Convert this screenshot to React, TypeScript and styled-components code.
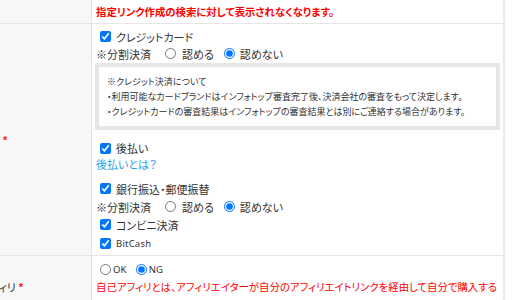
import React from "react";
import styled, { createGlobalStyle } from "styled-components";

const Global = createGlobalStyle`
  html, body { margin: 0; padding: 0; background: #fff; }
  body {
    font-family: "Noto Sans CJK JP", "Noto Sans", sans-serif;
    font-size: 11px;
    color: #333;
    font-feature-settings: "palt";
    overflow: hidden;
  }
`;

const Page = styled.div`
  width: 520px;
  height: 300px;
  overflow: hidden;
`;

const Table = styled.div`
  margin-left: -50px;
  width: 553px;
  border-right: 2px solid #ebebeb;
`;

const Row = styled.div`
  display: grid;
  grid-template-columns: 142px 1fr;
  border-bottom: 1px solid #e6e6e6;
`;

const LabelCell = styled.div`
  display: flex;
  align-items: center;
  gap: 3px;
  padding-left: 7px;
  background: #f7f7f7;
  border-right: 1px solid #e3e3e3;
  font-size: 11px;
  color: #333;
  white-space: nowrap;
`;

const Required = styled.span`
  color: #ff1a1a;
  font-family: "Liberation Sans", sans-serif;
  font-weight: bold;
  font-size: 11px;
`;

const ValueCell = styled.div<{ $pad: string }>`
  padding: ${(p) => p.$pad};
  display: flex;
  flex-direction: column;
`;

const Notice = styled.div<{ $bold?: boolean; $size: number }>`
  color: #ff0000;
  font-size: ${(p) => p.$size}px;
  font-weight: ${(p) => (p.$bold ? "bold" : "normal")};
  line-height: 18px;
`;

const Line = styled.div<{ $h: number; $mt?: number }>`
  display: flex;
  align-items: center;
  height: ${(p) => p.$h}px;
  margin-top: ${(p) => p.$mt ?? 0}px;
  white-space: nowrap;
`;

const Check = styled.input.attrs({ type: "checkbox", readOnly: true })`
  width: 11px;
  height: 11px;
  margin: 0 5px 0 4px;
  accent-color: #0075ff;
`;

const Radio = styled.input.attrs({ type: "radio", readOnly: true })<{ $ml?: number; $mr?: number }>`
  width: 11px;
  height: 11px;
  margin: 0 ${(p) => p.$mr ?? 6}px 0 ${(p) => p.$ml ?? 0}px;
  accent-color: #0075ff;
`;

const SplitLabel = styled.span`
  margin-right: 14px;
`;

const Latin = styled.span`
  font-family: "Noto Sans", sans-serif;
  font-size: 9.5px;
  letter-spacing: 0.2px;
`;

const InfoBox = styled.div`
  margin-top: 1px;
  margin-left: -1px;
  border: 4px solid #e6e6e6;
  padding: 7px 8px;
  font-size: 9px;
  line-height: 15px;
  color: #333;
`;

const Link = styled.a`
  color: #2b9fe4;
  text-decoration: none;
  cursor: pointer;
`;

const Gap = styled.span<{ $w: number }>`
  display: inline-block;
  width: ${(p) => p.$w}px;
`;

function SplitPayment({ name }: { name: string }) {
  return (
    <>
      <SplitLabel>※分割決済</SplitLabel>
      <Radio name={name} $mr={6} />
      <span>認める</span>
      <Gap $w={10} />
      <Radio name={name} defaultChecked $mr={5} />
      <span>認めない</span>
    </>
  );
}

export default function App() {
  return (
    <Page>
      <Global />
      <Table>
        <Row>
          <LabelCell />
          <ValueCell $pad="3px 4px 2px 4px">
            <Notice $bold $size={10.4}>指定リンク作成の検索に対して表示されなくなります。</Notice>
          </ValueCell>
        </Row>
        <Row>
          <LabelCell>
            <span>お支払い</span>
            <Required>*</Required>
          </LabelCell>
          <ValueCell $pad="4px 3px 2px 4px">
            <Line $h={17}>
              <Check defaultChecked />
              <span>クレジットカード</span>
            </Line>
            <Line $h={17}>
              <SplitPayment name="split1" />
            </Line>
            <InfoBox>
              <div>※クレジット決済について</div>
              <div>・利用可能なカードブランドはインフォトップ審査完了後、決済会社の審査をもって決定します。</div>
              <div>・クレジットカードの審査結果はインフォトップの審査結果とは別にご連絡する場合があります。</div>
            </InfoBox>
            <Line $h={16} $mt={10}>
              <Check defaultChecked />
              <span>後払い</span>
            </Line>
            <Line $h={15}>
              <Link>後払いとは？</Link>
            </Line>
            <Line $h={17} $mt={9}>
              <Check defaultChecked />
              <span>銀行振込・郵便振替</span>
            </Line>
            <Line $h={19}>
              <SplitPayment name="split2" />
            </Line>
            <Line $h={17}>
              <Check defaultChecked />
              <span>コンビニ決済</span>
            </Line>
            <Line $h={20}>
              <Check defaultChecked />
              <Latin>BitCash</Latin>
            </Line>
          </ValueCell>
        </Row>
        <Row>
          <LabelCell>
            <span>自己アフィリ</span>
            <Required>*</Required>
          </LabelCell>
          <ValueCell $pad="4px 4px 4px 4px">
            <Line $h={18}>
              <Radio name="self" $ml={4} $mr={2} />
              <Latin>OK</Latin>
              <Gap $w={9} />
              <Radio name="self" defaultChecked $mr={2} />
              <Latin>NG</Latin>
            </Line>
            <Notice $size={10.4}>
              自己アフィリとは、アフィリエイターが自分のアフィリエイトリンクを経由して自分で購入することです。
            </Notice>
          </ValueCell>
        </Row>
      </Table>
    </Page>
  );
}
